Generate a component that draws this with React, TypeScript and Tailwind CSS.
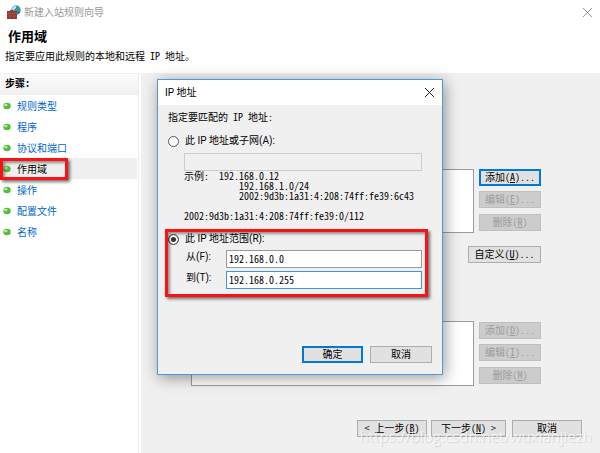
import { clsx } from "clsx";

const STEPS = [
  "规则类型",
  "程序",
  "协议和端口",
  "作用域",
  "操作",
  "配置文件",
  "名称",
];

const CURRENT_STEP = "作用域";

const EXAMPLES = `示例:  192.168.0.12
           192.168.1.0/24
           2002:9d3b:1a31:4:208:74ff:fe39:6c43

2002:9d3b:1a31:4:208:74ff:fe39:0/112`;

const SANS = "font-['Roboto','Noto_Sans_CJK_SC',sans-serif]";
const MONO =
  "font-['Noto_Sans_Mono_CJK_SC','Noto_Sans_CJK_SC','Liberation_Mono',monospace]";

interface ButtonProps {
  label: string;
  hotkey?: string;
  suffix?: string;
  disabled?: boolean;
  primary?: boolean;
  className?: string;
}

function Button({
  label,
  hotkey,
  suffix,
  disabled,
  primary,
  className,
}: ButtonProps) {
  return (
    <button
      type="button"
      disabled={disabled}
      className={clsx(
        "flex h-[17px] items-center justify-center pb-0.5 whitespace-pre text-[10px] leading-[10px]",
        disabled
          ? "border border-[#bfbfbf] bg-[#cccccc] text-[#9b9b9b]"
          : "bg-[#e1e1e1] text-black",
        !disabled && primary && "border-2 border-[#0078d7]",
        !disabled && !primary && "border border-[#adadad]",
        className,
      )}
    >
      {label}
      {hotkey && (
        <>
          (<u>{hotkey}</u>)
        </>
      )}
      {suffix}
    </button>
  );
}

function FirewallIcon() {
  return (
    <svg viewBox="0 0 14 14" className="size-[14px]" aria-hidden="true">
      <circle cx="9" cy="5" r="4.7" fill="#2f8fd0" />
      <path d="M5 3.5C6.5 1 8 .6 9.5 1L8.5 3.5 6 5.5Z" fill="#bfe6f5" />
      <path d="M9.5 1.2c2 .2 3.6 1.6 4 3.4L11.5 6 10 4.2Z" fill="#4aa83c" />
      <path d="M11 7l2.4-.8C12.9 8 11.6 9 10.4 9.4Z" fill="#1c6b9e" />
      <path d="M0 6h3V5h3v1h4v8H0Z" fill="#8f3a2a" />
      <path
        d="M0 8.5h10M0 11.2h10M3 6v2.5M7 6v2.5M5 8.5v2.7M2 8.5v2.7M8 8.5v2.7M3.5 11.2V14M7 11.2V14"
        stroke="#b5604e"
        strokeWidth=".5"
      />
    </svg>
  );
}

function CloseIcon() {
  return (
    <svg viewBox="0 0 9 9" className="size-[9px]" aria-hidden="true">
      <path d="M0 0l9 9M9 0L0 9" stroke="currentColor" strokeWidth="1" />
    </svg>
  );
}

function Bullet() {
  return (
    <svg viewBox="0 0 8 8" className="size-2 shrink-0" aria-hidden="true">
      <ellipse cx="4" cy="4" rx="3.7" ry="3.3" fill="#55bd38" />
      <ellipse cx="2.8" cy="3" rx="1.8" ry="1.3" fill="#b9e8a8" />
    </svg>
  );
}

function Sidebar() {
  return (
    <nav className="w-[139px] shrink-0 border-r border-[#ececec] bg-white">
      <h2 className="h-[21px] bg-linear-to-b from-[#fbfbfb] to-[#f0f0f0] pl-[5px] text-[10px] font-bold leading-[18px]">
        步骤:
      </h2>
      <ul>
        {STEPS.map((step) => {
          const current = step === CURRENT_STEP;
          return (
            <li
              key={step}
              className={clsx(
                "relative mr-px flex h-[21px] items-center gap-1.5 pl-[3px]",
                current && "bg-[#efefef]",
              )}
            >
              <Bullet />
              <a
                href="#"
                aria-current={current ? "step" : undefined}
                className={clsx(
                  "text-[10px] leading-[20px]",
                  current ? "text-black" : "text-[#0066cc]",
                )}
              >
                {step}
              </a>
              {current && (
                <span className="absolute top-0 left-0 h-[22px] w-[68px] border-[3px] border-[#f81414] shadow-[2px_2px_3px_rgba(0,0,0,0.55),inset_2px_2px_3px_rgba(0,0,0,0.4)]" />
              )}
            </li>
          );
        })}
      </ul>
    </nav>
  );
}

function ScopePanel() {
  return (
    <main className="flex flex-1 flex-col pl-[50px]">
      <div className="mt-[95px] mr-[59px] flex gap-[5px]">
        <div className="h-16 flex-1 border border-[#9a9ba6] bg-white" />
        <div className="flex w-[62px] flex-col">
          <Button label="添加" hotkey="A" suffix="..." primary />
          <Button label="编辑" hotkey="E" suffix="..." disabled className="mt-[5px]" />
          <Button label="删除" hotkey="R" disabled className="mt-1.5" />
        </div>
      </div>
      <div className="mt-[13px] mr-[59px] flex justify-end">
        <Button label="自定义" hotkey="U" suffix="..." className="w-[73px]" />
      </div>
      <div className="mt-[58px] mr-[59px] flex gap-[5px]">
        <div className="h-[65px] flex-1 border border-[#9a9ba6] bg-white" />
        <div className="flex w-[62px] flex-col pt-px">
          <Button label="添加" hotkey="D" suffix="..." disabled />
          <Button label="编辑" hotkey="I" suffix="..." disabled className="mt-[5px]" />
          <Button label="删除" hotkey="M" disabled className="mt-1.5" />
        </div>
      </div>
      <footer className="mt-auto mr-[18px] mb-4 flex justify-end">
        <Button label="< 上一步" hotkey="B" className="w-[70px]" />
        <Button label="下一步" hotkey="N" suffix=" >" className="ml-1 w-[75px]" />
        <Button label="取消" className="ml-1.5 w-[70px]" />
      </footer>
    </main>
  );
}

const RADIO =
  "size-[11px] shrink-0 appearance-none rounded-full border border-[#555555] bg-white checked:bg-[#333333] checked:shadow-[inset_0_0_0_2px_white]";

function IpDialog() {
  return (
    <div
      role="dialog"
      aria-labelledby="ip-title"
      className="w-[286px] border border-[#4a9ade] bg-[#f0f0f0] shadow-[2px_3px_14px_rgba(0,0,0,0.4)]"
    >
      <div
        className={clsx(
          "flex h-[25px] items-center justify-between bg-white pr-2 pl-[7px]",
          SANS,
        )}
      >
        <h2 id="ip-title" className="text-[10px] leading-[20px]">
          IP 地址
        </h2>
        <button type="button" aria-label="关闭" className="text-[#222222]">
          <CloseIcon />
        </button>
      </div>

      <div className="px-2.5 pt-1.5 pb-[11px] text-[10px] leading-[12px]">
        <p>指定要匹配的 IP 地址:</p>
        <label className={clsx("mt-3 flex items-center gap-1.5", SANS)}>
          <input type="radio" name="mode" className={RADIO} />
          此 IP 地址或子网(A):
        </label>
        <div className="mr-[10px] ml-4">
          <input
            type="text"
            disabled
            aria-label="IP 地址或子网"
            className="mt-1.5 block h-[18px] w-full border border-[#cccccc] bg-[#f0f0f0]"
          />
          <pre className={clsx("text-[10px] leading-[10px]", MONO)}>
            {EXAMPLES}
          </pre>
        </div>

        <div className="relative mt-3">
          <label className={clsx("flex items-center gap-1.5", SANS)}>
            <input
              type="radio"
              name="mode"
              defaultChecked
              className={RADIO}
            />
            此 IP 地址范围(R):
          </label>
          <div className="mt-[5px] mr-[10px] ml-[18px] grid grid-cols-[40px_1fr] gap-y-[3px]">
            <label htmlFor="from" className={clsx("leading-[14px]", SANS)}>
              从(F):
            </label>
            <input
              id="from"
              type="text"
              defaultValue="192.168.0.0"
              className="h-[18px] w-full border border-[#999999] bg-white px-[2px] pb-0.5 leading-[12px]"
            />
            <label htmlFor="to" className={clsx("leading-[14px]", SANS)}>
              到(T):
            </label>
            <input
              id="to"
              type="text"
              defaultValue="192.168.0.255"
              className="h-[18px] w-full border border-[#3c96df] bg-white px-[2px] pb-0.5 leading-[12px]"
            />
          </div>
          <span className="pointer-events-none absolute -inset-x-[3px] -top-1 -bottom-2 mr-[7px] border-[3px] border-[#f81414] shadow-[2px_2px_3px_rgba(0,0,0,0.55),inset_2px_2px_3px_rgba(0,0,0,0.4)]" />
        </div>

        <div className="mt-[57px] flex justify-end gap-[7px]">
          <Button label="确定" primary className="w-[61px]" />
          <Button label="取消" className="w-[62px]" />
        </div>
      </div>
    </div>
  );
}

export default function App() {
  return (
    <div
      className={clsx(
        "relative flex min-h-screen flex-col overflow-hidden bg-[#f0f0f0] text-black",
        MONO,
      )}
    >
      <header className="border-b border-[#f0f0f0] bg-white">
        <div className="flex h-6 items-center gap-[3px] pr-2 pl-[7px] text-[#999999]">
          <FirewallIcon />
          <span className="flex-1 text-[10px] leading-[20px]">
            新建入站规则向导
          </span>
          <button type="button" aria-label="关闭">
            <CloseIcon />
          </button>
        </div>
        <h1 className="mt-1 pl-2 text-[13px] font-bold leading-[16px]">
          作用域
        </h1>
        <p className="mt-1 pb-[9px] pl-[5px] text-[10px] leading-[16px]">
          指定要应用此规则的本地和远程 IP 地址。
        </p>
      </header>

      <div className="flex flex-1">
        <Sidebar />
        <div className="w-[2px] bg-white" />
        <ScopePanel />
      </div>

      <div className="absolute inset-x-0 top-[79px] flex justify-center">
        <IpDialog />
      </div>

      <span className="pointer-events-none absolute right-2 bottom-1.5 font-['Open_Sans',sans-serif] text-[15px] leading-[22px] text-white/70 [text-shadow:1px_1px_1px_rgba(0,0,0,0.12)]">
        https://blog.csdn.net/wuxianjiezh
      </span>
    </div>
  );
}
